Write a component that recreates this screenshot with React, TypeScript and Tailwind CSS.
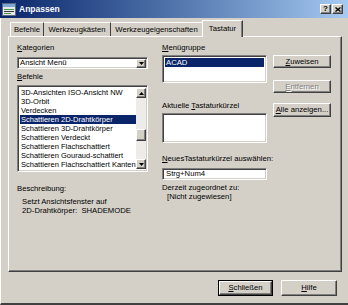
import React from "react";

const raised =
  "border border-t-white border-l-white border-r-[#404040] border-b-[#404040] shadow-[inset_-1px_-1px_0_#808080] bg-[#d4d0c8]";
const sunken =
  "border border-t-[#808080] border-l-[#808080] border-r-white border-b-white shadow-[inset_1px_1px_0_#404040,inset_-1px_-1px_0_#d4d0c8]";

const U = ({ children }: { children: React.ReactNode }) => <span className="underline underline-offset-[1px]">{children}</span>;

const Arrow = ({ up }: { up?: boolean }) => (
  <svg width="5" height="3" viewBox="0 0 5 3">
    <polygon points={up ? "2.5,0 5,3 0,3" : "0,0 5,0 2.5,3"} fill="#000" />
  </svg>
);

const commands = [
  "3D-Ansichten ISO-Ansicht NW",
  "3D-Orbit",
  "Verdecken",
  "Schattieren 2D-Drahtkörper",
  "Schattieren 3D-Drahtkörper",
  "Schattieren Verdeckt",
  "Schattieren Flachschattiert",
  "Schattieren Gouraud-schattiert",
  "Schattieren Flachschattiert Kanten",
];

const Button = ({ children, disabled, def, className = "" }: { children: React.ReactNode; disabled?: boolean; def?: boolean; className?: string }) => (
  <div className={`${def ? "border border-black" : ""} ${className}`}>
    <div className={`${raised} h-full flex items-center justify-center ${disabled ? "text-[#808080] [text-shadow:1px_1px_0_#fff]" : "text-black"}`}>
      {children}
    </div>
  </div>
);

const App = () => {
  return (
    <div
      className="w-[348px] h-[305px] bg-[#d4d0c8] flex flex-col overflow-hidden text-[7.7px] text-black"
      style={{ fontFamily: '"Liberation Sans", Arial, sans-serif' }}
    >
      {/* title bar */}
      <div className="h-[18px] shrink-0 flex items-center bg-gradient-to-r from-[#0a246a] to-[#a6caf0] pl-[2px] pr-[5px]">
        <svg width="14" height="13" viewBox="0 0 14 13">
          <rect x="0.5" y="0.5" width="13" height="12" fill="#e8e8e8" stroke="#5a6a7a" />
          <rect x="1" y="1" width="12" height="3" fill="#7fa8d8" />
          <rect x="2" y="6" width="10" height="1" fill="#4a9a4a" />
          <rect x="2" y="8" width="10" height="1" fill="#3b3b3b" />
          <rect x="2" y="10" width="7" height="1" fill="#4a9a4a" />
        </svg>
        <span className="ml-[3px] text-white font-bold text-[8.5px]">Anpassen</span>
        <div className="ml-auto flex gap-[1px]">
          <div className={`${raised} w-[11px] h-[10px] flex items-center justify-center font-bold text-[8px] leading-none`}>?</div>
          <div className={`${raised} w-[11px] h-[10px] flex items-center justify-center`}>
            <svg width="6" height="5" viewBox="0 0 6 5">
              <path d="M0.5 0.5 L5.5 4.5 M5.5 0.5 L0.5 4.5" stroke="#000" strokeWidth="1.3" />
            </svg>
          </div>
        </div>
      </div>

      <div className="flex-1 flex flex-col border-l border-l-white border-b-2 border-b-[#404040]">
        {/* tabs */}
        <div className="h-[18px] flex items-end pl-[9px] relative z-10">
          <div className="w-[34px] h-[14px] border-t border-l border-t-white border-l-white border-r border-r-[#404040] flex items-center justify-center rounded-t-[1px]">Befehle</div>
          <div className="w-[67px] h-[14px] border-t border-t-white border-r border-r-[#404040] flex items-center justify-center">Werkzeugkästen</div>
          <div className="w-[92px] h-[14px] border-t border-t-white border-r border-r-[#404040] flex items-center justify-center">Werkzeugeigenschaften</div>
          <div className="w-[41px] h-[17px] -mb-px -ml-[1px] bg-[#d4d0c8] border-t border-l border-t-white border-l-white border-r border-r-[#404040] shadow-[inset_-1px_0_0_#808080] flex items-center justify-center pb-[1px]">Tastatur</div>
        </div>

        {/* panel */}
        <div className="ml-[7px] w-[334px] h-[236px] border border-t-white border-l-white border-r-[#404040] border-b-[#404040] shadow-[inset_-1px_-1px_0_#808080] flex pl-[8px] pt-[6px]">
          {/* left column */}
          <div className="w-[131px] flex flex-col">
            <div className="h-[10px] leading-[10px]"><U>K</U>ategorien</div>
            <div className={`${sunken} mt-[4px] h-[12px] bg-white flex items-center pl-[2px] pr-[1px]`}>
              <span>Ansicht Menü</span>
              <div className={`${raised} ml-auto w-[10px] h-[9px] flex items-center justify-center`}>
                <Arrow />
              </div>
            </div>
            <div className="h-[10px] leading-[10px] mt-[3px]"><U>B</U>efehle</div>
            <div className={`${sunken} mt-[3px] h-[87px] bg-white flex p-[2px] pr-[1px]`}>
              <div className="flex-1 flex flex-col text-[7.5px]">
                {commands.map((c, i) => (
                  <div key={c} className={`h-[9px] leading-[9px] pl-[1px] whitespace-nowrap ${i === 3 ? "bg-[#0a246a] text-white" : ""}`}>
                    {c}
                  </div>
                ))}
              </div>
              <div className="w-[10px] flex flex-col">
                <div className={`${raised} h-[10px] flex items-center justify-center`}><Arrow up /></div>
                <div className="flex-1 bg-[#eeece8] flex flex-col">
                  <div className="h-[31px]" />
                  <div className={`${raised} h-[12px]`} />
                </div>
                <div className={`${raised} h-[10px] flex items-center justify-center`}><Arrow /></div>
              </div>
            </div>
            <div className="h-[10px] leading-[10px] mt-[12px]">Beschreibung:</div>
            <div className="pl-[5px] mt-[3px] leading-[9px]">
              <div>Setzt Ansichtsfenster auf</div>
              <div>2D-Drahtkörper:&nbsp; SHADEMODE</div>
            </div>
          </div>

          {/* middle column */}
          <div className="w-[105px] ml-[14px] flex flex-col">
            <div className="h-[10px] leading-[10px]"><U>M</U>enügruppe</div>
            <div className={`${sunken} mt-[2px] h-[28px] bg-white p-[2px]`}>
              <div className="h-[9px] leading-[9px] pl-[1px] bg-[#0a246a] text-white">ACAD</div>
            </div>
            <div className="h-[10px] leading-[10px] mt-[18px]">Aktuelle <U>T</U>astaturkürzel</div>
            <div className={`${sunken} mt-[2px] h-[30px] bg-white`} />
            <div className="h-[10px] leading-[10px] mt-[11px] whitespace-nowrap"><U>N</U>euesTastaturkürzel auswählen:</div>
            <div className={`${sunken} mt-[4px] h-[12px] bg-white flex items-center pl-[3px]`}>Strg+Num4</div>
            <div className="h-[9px] leading-[9px] mt-[3px]">Derzeit zugeordnet zu:</div>
            <div className="h-[9px] leading-[9px] pl-[5px]">[Nicht zugewiesen]</div>
          </div>

          {/* buttons column */}
          <div className="w-[58px] ml-[6px] flex flex-col pt-[12px]">
            <Button className="h-[13px]"><U>Z</U>uweisen</Button>
            <Button disabled className="h-[13px] mt-[12px]"><U>E</U>ntfernen</Button>
            <Button className="h-[14px] mt-[10px]"><U>A</U>lle anzeigen...</Button>
          </div>
        </div>

        {/* bottom buttons */}
        <div className="mt-[8px] flex justify-end gap-[8px] pr-[11px]">
          <Button def className="w-[55px] h-[16px]"><U>S</U>chließen</Button>
          <Button className="w-[56px] h-[16px]"><U>H</U>ilfe</Button>
        </div>
      </div>
    </div>
  );
};

export default App;
